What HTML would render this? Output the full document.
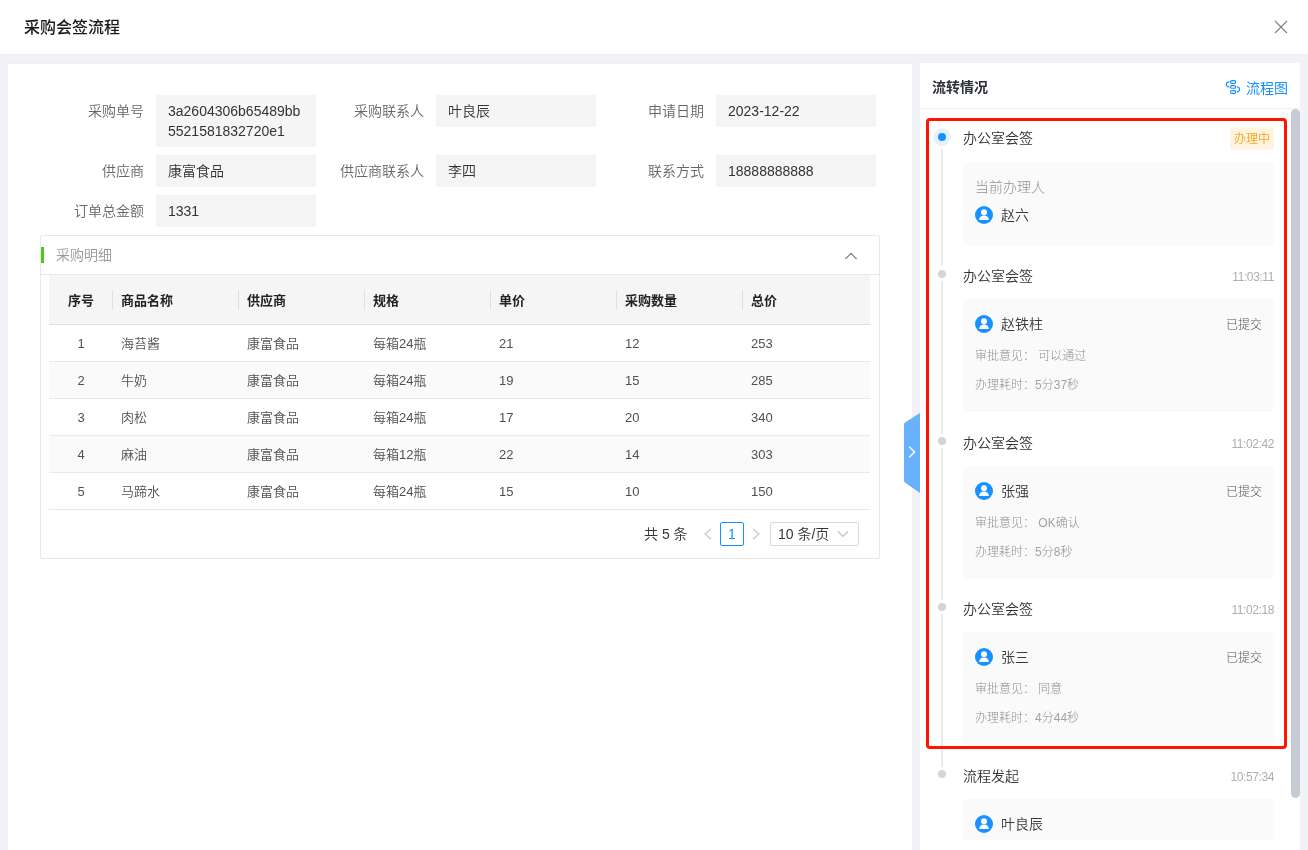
<!DOCTYPE html>
<html lang="zh-CN">
<head>
<meta charset="utf-8">
<title>采购会签流程</title>
<style>
*{box-sizing:border-box;margin:0;padding:0}
html{background:#f0f2f5}
body{width:1308px;height:850px;position:relative;overflow:hidden;background:#f0f2f5;
 font-family:"Liberation Sans","Noto Sans CJK SC",sans-serif;font-size:14px;color:#333;font-weight:350;
 -webkit-font-smoothing:antialiased;will-change:transform}
.abs{position:absolute}
/* header */
#hd{left:0;top:0;width:1308px;height:55px;background:#fff;border-bottom:1px solid #ececec}
#hd .t{left:24px;top:1px;line-height:54px;font-size:16px;font-weight:500;color:#1a1a1a}
/* left panel */
#lp{left:8px;top:63px;width:904px;height:787px;background:#fff;border-top:1px solid #eeeeef}
.lb{width:110px;text-align:right;line-height:32px;height:32px;color:#666;font-size:14px;white-space:nowrap}
.fd{width:160px;background:#f5f5f5;padding:6px 12px;line-height:20px;font-size:14px;color:#333;word-break:break-all}
/* collapse */
#cl{left:40px;top:235px;width:840px;height:324px;border:1px solid #e6e8ec;border-radius:2px;background:#fff}
#clh{left:0;top:0;width:838px;height:39px;border-bottom:1px solid #e6e8ec}
#clh .bar{left:0;top:11px;width:3px;height:16px;background:#52c41a}
#clh .tt{left:15px;top:0;line-height:38px;color:#999;font-size:14px}
/* table */
#tb{left:49px;top:275px;width:821px;font-size:13px;color:#505050}
#tb .r{position:relative;width:821px;height:37px;border-bottom:1px solid #e8e8e8;background:#fff}
#tb .r.h{height:50px;background:#f5f5f5;font-weight:700;color:#222;border-bottom-color:#dcdee2}
#tb .r.e{background:#fafafa}
#tb .c{position:absolute;top:0;height:36px;line-height:37px;padding-left:8px;white-space:nowrap}
#tb .h .c{height:49px;line-height:51px}
#tb .c0{left:0;width:64px;padding-left:0;text-align:center}
#tb .c1{left:64px}#tb .c2{left:190px}#tb .c3{left:316px}#tb .c4{left:442px}#tb .c5{left:568px}#tb .c6{left:694px}
#tb .h .c+.c:before{content:"";position:absolute;left:-1px;top:15px;height:20px;width:1px;background:#e0e0e0}

/* right panel */
#rp{left:920px;top:63px;width:380px;height:787px;background:#fff}
#rph{left:920px;top:63px;width:380px;height:46px;border-bottom:1px solid #efefef}
.tl-t{left:963px;font-size:14px;line-height:20px;color:#333;font-weight:350;white-space:nowrap}
.tl-time{right:34px;font-size:12px;line-height:20px;color:#adadad;font-weight:300;letter-spacing:-0.4px;white-space:nowrap}
.card{left:963px;width:311px;background:#fafafa;border-radius:4px}
.card .nm{left:38px;font-size:14px;line-height:20px;color:#3a3a3a;font-weight:350;white-space:nowrap}
.card .st{right:12px;font-size:12px;line-height:20px;color:#505050;font-weight:300;white-space:nowrap}
.card .ln{left:12px;font-size:12px;line-height:20px;color:#909090;font-weight:300;white-space:nowrap}
.card .ln .d{color:#a3a3a3}
.card svg.av{position:absolute;left:12px}
.dot{left:938px;width:8px;height:8px;border-radius:50%;background:#d3d5d9}
.vl{left:941px;width:2px;background:#ebebeb}
</style>
</head>
<body>
<div id="hd" class="abs"><div class="t abs">采购会签流程</div>
<svg class="abs" style="left:1274px;top:20px" width="14" height="14" viewBox="0 0 14 14"><path d="M1 1L13 13M13 1L1 13" stroke="#808080" stroke-width="1.1" fill="none"/></svg>
</div>
<div id="lp" class="abs"></div>

<!-- form -->
<div class="abs lb" style="left:34px;top:95px">采购单号</div>
<div class="abs fd" style="left:156px;top:95px">3a2604306b65489bb5521581832720e1</div>
<div class="abs lb" style="left:314px;top:95px">采购联系人</div>
<div class="abs fd" style="left:436px;top:95px">叶良辰</div>
<div class="abs lb" style="left:594px;top:95px">申请日期</div>
<div class="abs fd" style="left:716px;top:95px">2023-12-22</div>

<div class="abs lb" style="left:34px;top:155px">供应商</div>
<div class="abs fd" style="left:156px;top:155px">康富食品</div>
<div class="abs lb" style="left:314px;top:155px">供应商联系人</div>
<div class="abs fd" style="left:436px;top:155px">李四</div>
<div class="abs lb" style="left:594px;top:155px">联系方式</div>
<div class="abs fd" style="left:716px;top:155px">18888888888</div>

<div class="abs lb" style="left:34px;top:195px">订单总金额</div>
<div class="abs fd" style="left:156px;top:195px">1331</div>

<!-- collapse -->
<div id="cl" class="abs">
 <div id="clh" class="abs"><div class="bar abs"></div><div class="tt abs">采购明细</div>
 <svg class="abs" style="left:803px;top:15px" width="14" height="10" viewBox="0 0 14 10"><path d="M1.4 8L7 2.4L12.6 8" stroke="#7b8595" stroke-width="1.2" fill="none"/></svg>
 </div>
</div>
<div id="tb" class="abs">
 <div class="r h"><div class="c c0">序号</div><div class="c c1">商品名称</div><div class="c c2">供应商</div><div class="c c3">规格</div><div class="c c4">单价</div><div class="c c5">采购数量</div><div class="c c6">总价</div></div>
 <div class="r"><div class="c c0">1</div><div class="c c1">海苔酱</div><div class="c c2">康富食品</div><div class="c c3">每箱24瓶</div><div class="c c4">21</div><div class="c c5">12</div><div class="c c6">253</div></div>
 <div class="r e"><div class="c c0">2</div><div class="c c1">牛奶</div><div class="c c2">康富食品</div><div class="c c3">每箱24瓶</div><div class="c c4">19</div><div class="c c5">15</div><div class="c c6">285</div></div>
 <div class="r"><div class="c c0">3</div><div class="c c1">肉松</div><div class="c c2">康富食品</div><div class="c c3">每箱24瓶</div><div class="c c4">17</div><div class="c c5">20</div><div class="c c6">340</div></div>
 <div class="r e"><div class="c c0">4</div><div class="c c1">麻油</div><div class="c c2">康富食品</div><div class="c c3">每箱12瓶</div><div class="c c4">22</div><div class="c c5">14</div><div class="c c6">303</div></div>
 <div class="r"><div class="c c0">5</div><div class="c c1">马蹄水</div><div class="c c2">康富食品</div><div class="c c3">每箱24瓶</div><div class="c c4">15</div><div class="c c5">10</div><div class="c c6">150</div></div>
</div>
<!-- pagination -->
<div class="abs" style="left:644px;top:522px;line-height:24px;font-size:14px;color:#333;white-space:nowrap">共 5 条</div>
<svg class="abs" style="left:703px;top:528px" width="10" height="12" viewBox="0 0 10 12"><path d="M8 1L2 6L8 11" stroke="#c4c4c4" stroke-width="1.1" fill="none"/></svg>
<div class="abs" style="left:720px;top:522px;width:24px;height:24px;border:1px solid #1890ff;border-radius:2px;text-align:center;line-height:22px;font-size:14px;color:#1890ff;background:#fff">1</div>
<svg class="abs" style="left:751px;top:528px" width="10" height="12" viewBox="0 0 10 12"><path d="M2 1L8 6L2 11" stroke="#c4c4c4" stroke-width="1.1" fill="none"/></svg>
<div class="abs" style="left:770px;top:522px;width:89px;height:24px;border:1px solid #d9d9d9;border-radius:2px;line-height:22px;font-size:14px;color:#333;padding-left:7px;background:#fff;white-space:nowrap">10 条/页</div>
<svg class="abs" style="left:837px;top:530px" width="12" height="8" viewBox="0 0 12 8"><path d="M1 1.5L6 6.5L11 1.5" stroke="#c0c0c0" stroke-width="1.1" fill="none"/></svg>

<!-- right panel -->
<div id="rp" class="abs"></div>
<div id="rph" class="abs"></div>
<div class="abs" style="left:932px;top:76.5px;line-height:20px;font-size:14px;font-weight:700;color:#2b2f36;white-space:nowrap">流转情况</div>
<svg class="abs" style="left:1225px;top:79px" width="16" height="16" viewBox="0 0 16 16" fill="none" stroke="#1890ff" stroke-width="1.1"><rect x="5.5" y="1.6" width="5.2" height="2.8" rx="1.4"/><rect x="5.5" y="6.6" width="5.2" height="2.7" rx="1.35"/><rect x="5.5" y="11.6" width="5.2" height="2.8" rx="1.4"/><path d="M4.4 2.9A3 2.55 0 0 0 4.4 8"/><path d="M11.8 7.8A2.8 2.55 0 0 1 11.8 12.9"/></svg>
<div class="abs" style="left:1246px;top:78px;line-height:20px;font-size:14px;font-weight:400;color:#1890ff;white-space:nowrap">流程图</div>
<div class="abs" style="left:1291px;top:109px;width:8.5px;height:689px;border-radius:4.5px;background:#c6cbd4"></div>
<div id="scr" class="abs" style="left:920px;top:109px;width:371px;height:731px;overflow:hidden">
<div class="abs" style="left:-920px;top:-109px;width:1308px;height:1000px">
<div class="abs vl" style="top:149px;height:117px"></div>
<div class="abs vl" style="top:281px;height:153px"></div>
<div class="abs vl" style="top:448px;height:152px"></div>
<div class="abs vl" style="top:614px;height:153px"></div>
<div class="abs" style="left:933px;top:128px;width:18px;height:18px;border-radius:50%;background:#e6f1fe"></div><div class="abs" style="left:938px;top:133px;width:8px;height:8px;border-radius:50%;background:#1890ff"></div>
<div class="abs dot" style="top:270px"></div>
<div class="abs dot" style="top:437px"></div>
<div class="abs dot" style="top:603px"></div>
<div class="abs dot" style="top:770px"></div>
<div class="abs tl-t" style="top:128px">办公室会签</div>
<div class="abs" style="left:1230px;top:127px;width:44px;height:23px;border-radius:3px;background:#fff4e1;color:#f9a519;font-size:12px;line-height:24px;text-align:center;white-space:nowrap">办理中</div>
<div class="card abs" style="top:162px;height:84px"><div class="abs ln" style="top:15px;font-size:14px">当前办理人</div><svg class="av" style="top:44px" width="18" height="18" viewBox="0 0 18 18"><circle cx="9" cy="9" r="9" fill="#1890ff"/><circle cx="9" cy="6.3" r="3" fill="#fff"/><path d="M4.1 14c0-2.7 1.9-4.5 4.9-4.5s4.9 1.8 4.9 4.5z" fill="#fff"/></svg><div class="abs nm" style="top:43px">赵六</div></div>
<div class="abs tl-t" style="top:266px">办公室会签</div><div class="abs tl-time" style="top:267px">11:03:11</div>
<div class="card abs" style="top:299px;height:113px"><svg class="av" style="top:16px" width="18" height="18" viewBox="0 0 18 18"><circle cx="9" cy="9" r="9" fill="#1890ff"/><circle cx="9" cy="6.3" r="3" fill="#fff"/><path d="M4.1 14c0-2.7 1.9-4.5 4.9-4.5s4.9 1.8 4.9 4.5z" fill="#fff"/></svg><div class="abs nm" style="top:15px">赵铁柱</div><div class="abs st" style="top:16px">已提交</div><div class="abs ln" style="top:47px">审批意见： 可以通过</div><div class="abs ln" style="top:76px">办理耗时：<span class="d">5</span>分<span class="d">37</span>秒</div></div>
<div class="abs tl-t" style="top:433px">办公室会签</div><div class="abs tl-time" style="top:434px">11:02:42</div>
<div class="card abs" style="top:466px;height:113px"><svg class="av" style="top:16px" width="18" height="18" viewBox="0 0 18 18"><circle cx="9" cy="9" r="9" fill="#1890ff"/><circle cx="9" cy="6.3" r="3" fill="#fff"/><path d="M4.1 14c0-2.7 1.9-4.5 4.9-4.5s4.9 1.8 4.9 4.5z" fill="#fff"/></svg><div class="abs nm" style="top:15px">张强</div><div class="abs st" style="top:16px">已提交</div><div class="abs ln" style="top:47px">审批意见： <span class="d">OK</span>确认</div><div class="abs ln" style="top:76px">办理耗时：<span class="d">5</span>分<span class="d">8</span>秒</div></div>
<div class="abs tl-t" style="top:599px">办公室会签</div><div class="abs tl-time" style="top:600px">11:02:18</div>
<div class="card abs" style="top:632px;height:113px"><svg class="av" style="top:16px" width="18" height="18" viewBox="0 0 18 18"><circle cx="9" cy="9" r="9" fill="#1890ff"/><circle cx="9" cy="6.3" r="3" fill="#fff"/><path d="M4.1 14c0-2.7 1.9-4.5 4.9-4.5s4.9 1.8 4.9 4.5z" fill="#fff"/></svg><div class="abs nm" style="top:15px">张三</div><div class="abs st" style="top:16px">已提交</div><div class="abs ln" style="top:47px">审批意见： 同意</div><div class="abs ln" style="top:76px">办理耗时：<span class="d">4</span>分<span class="d">44</span>秒</div></div>
<div class="abs tl-t" style="top:766px">流程发起</div><div class="abs tl-time" style="top:767px">10:57:34</div>
<div class="card abs" style="top:799px;height:80px"><svg class="av" style="top:16px" width="18" height="18" viewBox="0 0 18 18"><circle cx="9" cy="9" r="9" fill="#1890ff"/><circle cx="9" cy="6.3" r="3" fill="#fff"/><path d="M4.1 14c0-2.7 1.9-4.5 4.9-4.5s4.9 1.8 4.9 4.5z" fill="#fff"/></svg><div class="abs nm" style="top:15px">叶良辰</div></div>
</div></div>
<div class="abs" style="left:926.3px;top:118.2px;width:361.2px;height:631.2px;border:3px solid #ff1400;border-radius:4px"></div>
<svg class="abs" style="left:904px;top:412px" width="16" height="82" viewBox="0 0 16 82"><path d="M16 1L1 10.4Q0 11 0 12.4V68.6Q0 70 1 70.6L16 81z" fill="#69b1fd"/><path d="M5.2 34.8L10.6 40L5.2 45.2" stroke="#fff" stroke-width="1.4" fill="none"/></svg>
</body>
</html>
